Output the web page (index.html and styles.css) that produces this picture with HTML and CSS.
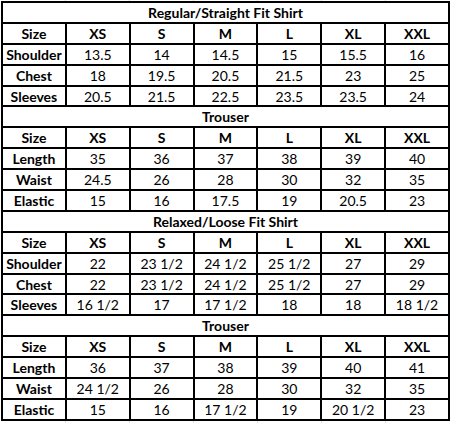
FILE: index.html
```html
<!DOCTYPE html>
<html>
<head>
<meta charset="utf-8">
<link rel="stylesheet" href="styles.css">
</head>
<body>
<table class="chart">
<colgroup><col><col><col><col><col><col><col></colgroup>
<tbody>
<tr><td class="title" colspan="7">Regular/Straight Fit Shirt</td></tr>
<tr class="head"><td>Size</td><td>XS</td><td>S</td><td>M</td><td>L</td><td>XL</td><td>XXL</td></tr>
<tr><td class="label">Shoulder</td><td>13.5</td><td>14</td><td>14.5</td><td>15</td><td>15.5</td><td>16</td></tr>
<tr><td class="label">Chest</td><td>18</td><td>19.5</td><td>20.5</td><td>21.5</td><td>23</td><td>25</td></tr>
<tr><td class="label">Sleeves</td><td>20.5</td><td>21.5</td><td>22.5</td><td>23.5</td><td>23.5</td><td>24</td></tr>
<tr><td class="title" colspan="7">Trouser</td></tr>
<tr class="head"><td>Size</td><td>XS</td><td>S</td><td>M</td><td>L</td><td>XL</td><td>XXL</td></tr>
<tr><td class="label">Length</td><td>35</td><td>36</td><td>37</td><td>38</td><td>39</td><td>40</td></tr>
<tr><td class="label">Waist</td><td>24.5</td><td>26</td><td>28</td><td>30</td><td>32</td><td>35</td></tr>
<tr><td class="label">Elastic</td><td>15</td><td>16</td><td>17.5</td><td>19</td><td>20.5</td><td>23</td></tr>
<tr><td class="title" colspan="7">Relaxed/Loose Fit Shirt</td></tr>
<tr class="head"><td>Size</td><td>XS</td><td>S</td><td>M</td><td>L</td><td>XL</td><td>XXL</td></tr>
<tr><td class="label">Shoulder</td><td>22</td><td>23 1/2</td><td>24 1/2</td><td>25 1/2</td><td>27</td><td>29</td></tr>
<tr><td class="label">Chest</td><td>22</td><td>23 1/2</td><td>24 1/2</td><td>25 1/2</td><td>27</td><td>29</td></tr>
<tr><td class="label">Sleeves</td><td>16 1/2</td><td>17</td><td>17 1/2</td><td>18</td><td>18</td><td>18 1/2</td></tr>
<tr><td class="title" colspan="7">Trouser</td></tr>
<tr class="head"><td>Size</td><td>XS</td><td>S</td><td>M</td><td>L</td><td>XL</td><td>XXL</td></tr>
<tr><td class="label">Length</td><td>36</td><td>37</td><td>38</td><td>39</td><td>40</td><td>41</td></tr>
<tr><td class="label">Waist</td><td>24 1/2</td><td>26</td><td>28</td><td>30</td><td>32</td><td>35</td></tr>
<tr><td class="label">Elastic</td><td>15</td><td>16</td><td>17 1/2</td><td>19</td><td>20 1/2</td><td>23</td></tr>
</tbody>
</table>
</body>
</html>
```
FILE: styles.css
```css
html, body {
  margin: 0;
  padding: 0;
  background: #fff;
}
body {
  width: 451px;
  height: 423px;
  overflow: hidden;
  background-image: linear-gradient(to right,
    transparent 65px, #dcdcdc 65px, #dcdcdc 66px, transparent 66px,
    transparent 129px, #dcdcdc 129px, #dcdcdc 130px, transparent 130px,
    transparent 193px, #dcdcdc 193px, #dcdcdc 194px, transparent 194px,
    transparent 257px, #dcdcdc 257px, #dcdcdc 258px, transparent 258px,
    transparent 321px, #dcdcdc 321px, #dcdcdc 322px, transparent 322px,
    transparent 385px, #dcdcdc 385px, #dcdcdc 386px, transparent 386px);
}
.chart {
  margin: 1px 0 0 1px;
  width: 449px;
  height: 420px;
  table-layout: fixed;
  border-collapse: separate;
  border-spacing: 0;
  border-top: 2px solid #000;
  border-left: 2px solid #000;
  background: #fff;
  font-family: Lato, "Open Sans", sans-serif;
  font-size: 14px;
  color: #000;
}
.chart td {
  border-right: 2px solid #000;
  border-bottom: 2px solid #000;
  padding: 0;
  line-height: 17px;
  text-align: center;
  vertical-align: middle;
  white-space: nowrap;
  overflow: hidden;
}
.chart .title,
.chart .head td,
.chart .label {
  font-weight: bold;
}
```
